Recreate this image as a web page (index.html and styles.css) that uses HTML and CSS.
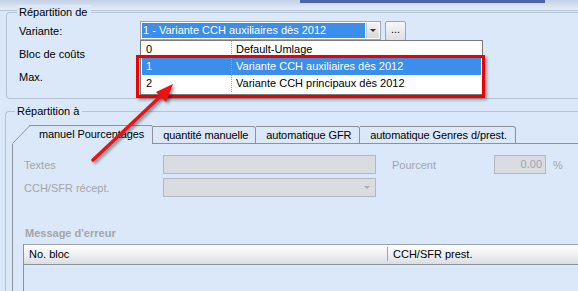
FILE: index.html
```html
<!DOCTYPE html>
<html>
<head>
    <meta charset="utf-8">
    <link rel="stylesheet" href="styles.css">
</head>
<body>
    <div class="window">
        <div class="topbar"><span class="topbar-band"></span></div>

        <div class="group group-source">
            <span class="legend">Répartition de</span>
            <div class="row">
                <span class="label">Variante:</span>
                <div class="combo combo-focus">
                    <span class="combo-text">1 - Variante CCH auxiliaires dès 2012</span>
                    <span class="combo-arrow"><span class="tri"></span></span>
                </div>
                <button class="dots">...</button>
            </div>
            <div class="row">
                <span class="label">Bloc de coûts</span>
            </div>
            <div class="row">
                <span class="label">Max.</span>
            </div>
        </div>

        <div class="group group-target">
            <span class="legend">Répartition à</span>
            <div class="tabs">
                <div class="tab tab-active">
                    <svg class="tab-slant" width="19" height="19" viewBox="0 0 19 19">
                        <polygon points="0,19 18,1 19,1 19,19" fill="#dae8f9"/>
                        <line x1="0.5" y1="18.5" x2="17.5" y2="1" stroke="#8d939c" stroke-width="1"/>
                        <line x1="17" y1="0.5" x2="19" y2="0.5" stroke="#8d939c" stroke-width="1"/>
                    </svg>
                    <span class="tab-label">manuel Pourcentages</span>
                </div>
                <div class="tab tab-qty"><span class="tab-label">quantité manuelle</span></div>
                <div class="tab tab-gfr"><span class="tab-label">automatique GFR</span></div>
                <div class="tab tab-genre"><span class="tab-label">automatique Genres d/prest.</span></div>
                <div class="tab-rest"></div>
            </div>
            <div class="panel">
                <div class="field-row">
                    <span class="label label-off">Textes</span>
                    <div class="input input-off input-wide"></div>
                    <span class="label label-off label-pct">Pourcent</span>
                    <div class="input input-off input-num">0.00</div>
                    <span class="unit">%</span>
                </div>
                <div class="field-row">
                    <span class="label label-off">CCH/SFR récept.</span>
                    <div class="input input-off input-wide input-combo"><span class="tri tri-off"></span></div>
                </div>
                <div class="section-title">Message d'erreur</div>
                <div class="grid">
                    <div class="grid-head">
                        <span class="col col-bloc">No. bloc</span>
                        <span class="col col-prest">CCH/SFR prest.</span>
                    </div>
                </div>
            </div>
        </div>

        <!-- open dropdown of the Variante combo -->
        <div class="dropdown">
            <div class="opt"><span class="opt-key">0</span><span class="opt-val">Default-Umlage</span></div>
            <div class="opt opt-sel"><span class="opt-key">1</span><span class="opt-val">Variante CCH auxiliaires dès 2012</span></div>
            <div class="opt"><span class="opt-key">2</span><span class="opt-val">Variante CCH principaux dès 2012</span></div>
        </div>
        <div class="mark"></div>

        <svg class="arrow" width="200" height="200" viewBox="0 0 200 200">
            <line x1="93" y1="160" x2="163" y2="94" stroke="#ee1111" stroke-width="3.5" stroke-linecap="round"/>
            <polygon points="173,84 156,92 166,102" fill="#ee1111"/>
        </svg>
    </div>
</body>
</html>
```

FILE: styles.css
```css
body {
    margin: 0;
    background: #dae8f9;
    font-family: "Liberation Sans", Arial, sans-serif;
    font-size: 11px;
    color: #000;
}

.window {
    position: relative;
    width: 578px;
    height: 291px;
    overflow: hidden;
}

.topbar {
    height: 10px;
    background: linear-gradient(#c3d0e6, #e6eef9);
    border-bottom: 1px solid #b5c4d8;
}
.topbar-band {
    display: block;
    margin-left: 300px;
    width: 245px;
    height: 3px;
    background: #4f63a8;
}

.group {
    position: relative;
    margin-left: 5px;
    border: 1px solid #b8c4d4;
    border-right: none;
    border-radius: 4px 0 0 4px;
}
.legend {
    position: absolute;
    top: -8px;
    left: 10px;
    padding: 0 3px 0 2px;
    background: #dae8f9;
    line-height: 14px;
}

.group-source {
    margin-top: 1px;
    margin-left: 6px;
    padding: 8px 0 0 12px;
    box-sizing: border-box;
    height: 87px;
}
.row {
    display: flex;
    align-items: center;
    height: 19px;
    margin-bottom: 4px;
}
.row .label {
    width: 121px;
}

.combo {
    display: flex;
    width: 241px;
    height: 19px;
    box-sizing: border-box;
    border: 1px solid #9fa7b3;
    background: #fff;
    padding: 1px;
}
.combo-text {
    flex: 1;
    background: #3b8eea;
    color: #fff;
    padding-left: 1px;
    line-height: 15px;
    white-space: nowrap;
    overflow: hidden;
}
.combo-arrow {
    width: 12px;
    margin-left: 1px;
    display: flex;
    align-items: center;
    justify-content: center;
    background: linear-gradient(#f4f4f4, #d8d8d8);
    border-left: 1px solid #c3c7cc;
}
.tri {
    width: 0;
    height: 0;
    border-left: 3px solid transparent;
    border-right: 3px solid transparent;
    border-top: 3px solid #333;
}
.tri-off {
    border-top-color: #a8adb4;
}

.dots {
    margin-left: 4px;
    width: 21px;
    height: 20px;
    padding: 0 0 4px;
    font: 11px "Liberation Sans", Arial, sans-serif;
    border: 1px solid #9ea5ae;
    border-radius: 2px;
    background: linear-gradient(#f6f7f9, #dcdfe4);
}

.group-target {
    margin-top: 12px;
    height: 200px;
    padding: 13px 0 0 6px;
}
.group-target .legend {
    left: 9px;
}

.tabs {
    display: flex;
    height: 19px;
}
.tab {
    display: flex;
    align-items: stretch;
    border: 1px solid #8d939c;
    border-left: none;
    border-radius: 0 3px 0 0;
    margin-top: 1px;
    height: 18px;
    box-sizing: border-box;
}
.tab-label {
    line-height: 16px;
    padding-left: 10px;
    white-space: nowrap;
    letter-spacing: -0.1px;
}
.tab-active {
    margin-top: 0;
    height: 19px;
    border: none;
    border-right: 1px solid #8d939c;
}
.tab-active .tab-label {
    border-top: 1px solid #8d939c;
    padding: 0 8px;
    line-height: 17px;
}
.tab-slant {
    display: block;
}
.tab-qty {
    width: 103px;
}
.tab-gfr {
    width: 104px;
}
.tab-genre {
    width: 156px;
}
.tab-rest {
    flex: 1;
    border-bottom: 1px solid #8d939c;
}

.panel {
    border-left: 1px solid #8d939c;
    height: 160px;
    padding: 11px 0 0 11px;
}
.field-row {
    display: flex;
    align-items: center;
    height: 19px;
    margin-bottom: 4px;
}
.field-row .label {
    width: 139px;
}
.label-off {
    color: #a3a6ab;
}
.field-row .label-pct {
    width: auto;
    margin-left: 16px;
}
.input {
    height: 19px;
    box-sizing: border-box;
    border: 1px solid #b3b8c0;
}
.input-off {
    background: #d9dce1;
    color: #a3a6ab;
}
.input-wide {
    width: 213px;
}
.input-num {
    width: 52px;
    margin-left: 58px;
    text-align: right;
    padding-right: 3px;
    line-height: 17px;
}
.input-combo {
    display: flex;
    align-items: center;
    justify-content: flex-end;
    padding-right: 5px;
}
.unit {
    margin-left: 7px;
    color: #a3a6ab;
}

.section-title {
    margin-top: 29px;
    margin-left: 1px;
    font-weight: bold;
    color: #a3a6ab;
    line-height: 14px;
}
.grid {
    margin-top: 4px;
    margin-left: -1px;
    border-left: 1px solid #8d939c;
    height: 60px;
}
.grid-head {
    display: flex;
    height: 19px;
    border-top: 1px solid #9ba3ae;
    border-bottom: 1px solid #8d939c;
    background: linear-gradient(#ffffff, #f1f2f4 45%, #d9dde3);
}
.col {
    line-height: 19px;
    white-space: nowrap;
}
.col-bloc {
    width: 358px;
    padding-left: 5px;
}
.col-prest {
    border-left: 1px solid #a0a4aa;
    padding-left: 5px;
    line-height: 14px;
    margin-top: 2px;
    height: 14px;
}

.dropdown {
    position: absolute;
    left: 140px;
    top: 40px;
    width: 343px;
    height: 55px;
    box-sizing: border-box;
    border: 1px solid #7a7a7a;
    background: #fff;
    padding: 0 1px;
}
.opt {
    display: flex;
    height: 17px;
    line-height: 17px;
}
.opt-key {
    width: 85px;
    padding-left: 4px;
    border-right: 1px dotted #a0a0a0;
}
.opt-val {
    padding-left: 4px;
}
.opt-sel {
    background: #3b8eea;
    color: #fff;
}

.mark {
    position: absolute;
    left: 136px;
    top: 55px;
    width: 349px;
    height: 43px;
    box-sizing: border-box;
    border: 3px solid #ee0000;
    box-shadow: 2px 2px 3px rgba(0, 0, 0, 0.35);
}

.arrow {
    position: absolute;
    left: 0;
    top: 0;
    filter: drop-shadow(2px 2px 1.5px rgba(0, 0, 0, 0.4));
}
```
